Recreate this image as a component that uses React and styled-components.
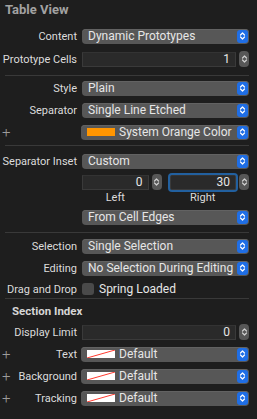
import React from 'react'
import styled, { createGlobalStyle } from 'styled-components'

const GlobalStyle = createGlobalStyle`
  html, body {
    margin: 0;
    padding: 0;
    background: #1e1e1e;
  }
  body {
    font-family: Roboto, "Liberation Sans", sans-serif;
    font-size: 11px;
    color: #dcdcdc;
    -webkit-font-smoothing: antialiased;
  }
`

const Panel = styled.div`
  width: 257px;
  height: 419px;
  box-sizing: border-box;
  padding-right: 8px;
  background: #1e1e1e;
  overflow: hidden;
`
const Title = styled.div`
  height: 24px;
  line-height: 19px;
  padding-left: 5px;
  font-size: 13px;
  font-weight: 700;
  color: #a2a2a2;
`
const Section = styled.div`
  display: flex;
  flex-direction: column;
  gap: ${p => p.$gap}px;
  padding: ${p => p.$pt}px 0 ${p => p.$pb}px;
`
const Divider = styled.div`
  height: 1px;
  margin-left: 5px;
  background: #393939;
`
const SectionTitle = styled.div`
  height: 25px;
  display: flex;
  align-items: center;
  padding: 0 0 1px 12px;
  box-sizing: border-box;
  font-size: 11.5px;
  font-weight: 700;
  color: #d6d6d6;
`
const Row = styled.div`
  display: grid;
  grid-template-columns: 77px 1fr;
  column-gap: 5px;
  align-items: ${p => p.$top ? 'start' : 'center'};
  height: ${p => p.$h || 16}px;
`
const Label = styled.div`
  display: flex;
  justify-content: ${p => p.$plus ? 'space-between' : 'flex-end'};
  align-items: center;
  white-space: nowrap;
  color: #dcdcdc;
  padding-left: ${p => p.$plus ? 2 : 0}px;
`
const Plus = styled.span`
  font-size: 15px;
  font-weight: 300;
  color: #9c9c9c;
  line-height: 1;
`
const Popup = styled.div`
  display: flex;
  align-items: center;
  height: 15px;
  margin-left: ${p => p.$swatch ? -1 : 0}px;
  padding-left: 6px;
  border-radius: 4px;
  background: #575757;
  box-shadow: inset 0 1px 0 #626262;
  font-size: 12px;
`
const PopupText = styled.span`
  flex: 1;
  min-width: 0;
  overflow: hidden;
  white-space: nowrap;
  color: #e6e6e6;
`
const ArrowButton = styled.span`
  display: flex;
  align-items: center;
  justify-content: center;
  flex: none;
  width: 11px;
  height: 13px;
  margin: 0 1px 0 2px;
  border-radius: 3px;
  background: #1f6ee5;
`
const Swatch = styled.span`
  flex: none;
  width: 28px;
  height: 8px;
  margin-right: 4px;
  background: ${p => p.$color || '#ffffff'};
  display: flex;
`
const FieldRow = styled.div`
  display: flex;
  align-items: center;
  gap: 3px;
  height: 16px;
`
const TextField = styled.div`
  flex: 1;
  height: 15px;
  box-sizing: border-box;
  padding-right: 5px;
  display: flex;
  align-items: center;
  justify-content: flex-end;
  background: #2a2a2a;
  border: 1px solid #3a3a3a;
  border-top-color: #333;
  color: #e6e6e6;
  font-size: 12px;
  box-shadow: ${p => p.$focus ? '0 0 0 2px #22609f' : 'none'};
  border-radius: ${p => p.$focus ? 2 : 0}px;
`
const Stepper = styled.span`
  display: flex;
  align-items: center;
  justify-content: center;
  flex: none;
  width: 10px;
  height: 16px;
  border-radius: 4px;
  background: #575757;
`
const InsetGrid = styled.div`
  display: grid;
  grid-template-columns: 1fr 1fr;
  column-gap: 8px;
`
const InsetGroup = styled.div`
  display: flex;
  flex-direction: column;
`
const InsetLabel = styled.div`
  height: 14px;
  line-height: 15px;
  padding-right: 13px;
  text-align: center;
  color: #dcdcdc;
`
const Check = styled.div`
  display: flex;
  align-items: center;
  gap: 5px;
  color: #e6e6e6;
  font-size: 12px;
`
const Box = styled.span`
  width: 12px;
  height: 12px;
  border-radius: 3px;
  background: #4a4a4a;
`

const Chevrons = ({ color = '#fff' }) => (
  <svg width="7" height="10" viewBox="0 0 7 10">
    <path d="M1.5 4L3.5 2L5.5 4M1.5 6L3.5 8L5.5 6" fill="none" stroke={color} strokeWidth="1.2" strokeLinecap="round" strokeLinejoin="round" />
  </svg>
)

const NoColor = () => (
  <svg width="28" height="8" viewBox="0 0 28 8">
    <line x1="0" y1="8" x2="28" y2="0" stroke="#ff3b30" strokeWidth="1" />
  </svg>
)

const PopupButton = ({ children, swatch }) => (
  <Popup $swatch={!!swatch}>
    {swatch}
    <PopupText>{children}</PopupText>
    <ArrowButton><Chevrons /></ArrowButton>
  </Popup>
)

const NumberField = ({ value, focus }) => (
  <FieldRow>
    <TextField $focus={focus}>{value}</TextField>
    <Stepper><Chevrons color="#d0d0d0" /></Stepper>
  </FieldRow>
)

const ColorRow = ({ label }) => (
  <Row>
    <Label $plus><Plus>+</Plus>{label}</Label>
    <PopupButton swatch={<Swatch><NoColor /></Swatch>}>Default</PopupButton>
  </Row>
)

export default function App() {
  return (
    <Panel>
      <GlobalStyle />
      <Title>Table View</Title>
      <Section $pt={4} $pb={8} $gap={7}>
        <Row>
          <Label>Content</Label>
          <PopupButton>Dynamic Prototypes</PopupButton>
        </Row>
        <Row>
          <Label>Prototype Cells</Label>
          <NumberField value="1" />
        </Row>
      </Section>
      <Divider />
      <Section $pt={4} $pb={5} $gap={6}>
        <Row>
          <Label>Style</Label>
          <PopupButton>Plain</PopupButton>
        </Row>
        <Row>
          <Label>Separator</Label>
          <PopupButton>Single Line Etched</PopupButton>
        </Row>
        <Row>
          <Label $plus><Plus>+</Plus></Label>
          <PopupButton swatch={<Swatch $color="#ff9500" />}>System Orange Color</PopupButton>
        </Row>
      </Section>
      <Divider />
      <Section $pt={7} $pb={7} $gap={5}>
        <Row>
          <Label>Separator Inset</Label>
          <PopupButton>Custom</PopupButton>
        </Row>
        <Row $h={30} $top>
          <span />
          <InsetGrid>
            <InsetGroup>
              <NumberField value="0" />
              <InsetLabel>Left</InsetLabel>
            </InsetGroup>
            <InsetGroup>
              <NumberField value="30" focus />
              <InsetLabel>Right</InsetLabel>
            </InsetGroup>
          </InsetGrid>
        </Row>
        <Row>
          <span />
          <PopupButton>From Cell Edges</PopupButton>
        </Row>
      </Section>
      <Divider />
      <Section $pt={5} $pb={4} $gap={6}>
        <Row>
          <Label>Selection</Label>
          <PopupButton>Single Selection</PopupButton>
        </Row>
        <Row>
          <Label>Editing</Label>
          <PopupButton>No Selection During Editing</PopupButton>
        </Row>
        <Row $h={12}>
          <Label>Drag and Drop</Label>
          <Check><Box />Spring Loaded</Check>
        </Row>
      </Section>
      <Divider />
      <SectionTitle>Section Index</SectionTitle>
      <Section $pt={0} $pb={0} $gap={6}>
        <Row>
          <Label>Display Limit</Label>
          <NumberField value="0" />
        </Row>
        <ColorRow label="Text" />
        <ColorRow label="Background" />
        <ColorRow label="Tracking" />
      </Section>
    </Panel>
  )
}
